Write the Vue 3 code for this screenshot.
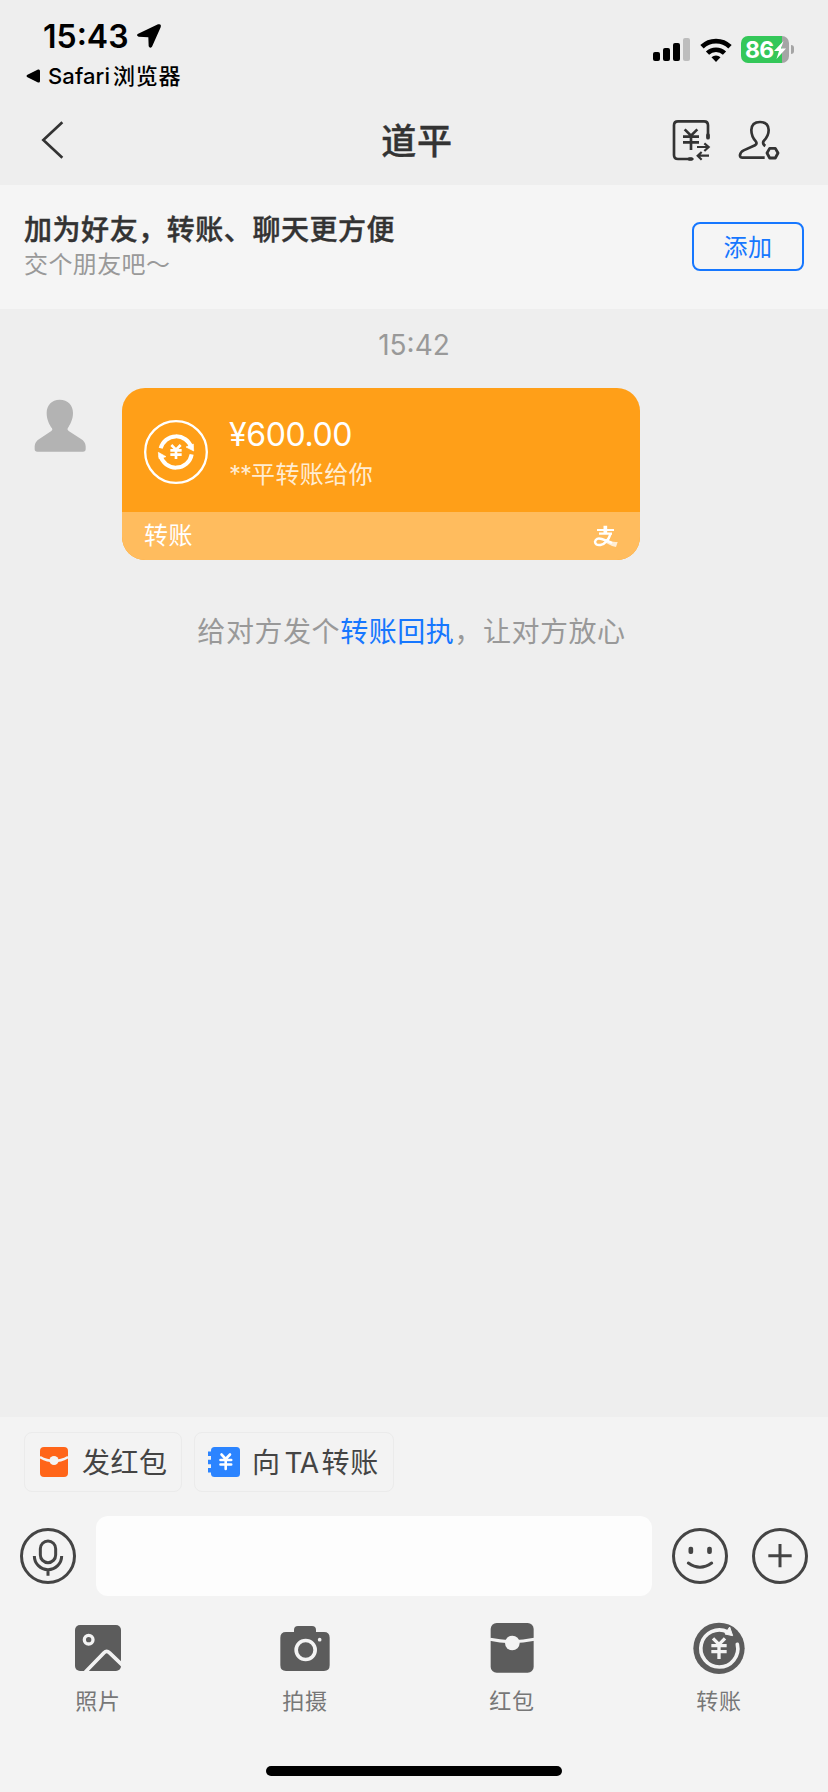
<script setup>
const tools = [
  { id: 'photo', label: '照片' },
  { id: 'camera', label: '拍摄' },
  { id: 'packet', label: '红包' },
  { id: 'transfer', label: '转账' },
]
</script>

<template>
  <div class="screen">
    <header class="header">
      <div class="status">
        <div class="status-left">
          <div class="clock">
            <span class="clock-time">15:43</span>
            <svg class="location" width="26" height="26" viewBox="408 69 78 78">
              <path d="M413 102 L474 73 Q485 70 482 82 L456 140 Q450 147 446 139 L445 112 L416 110 Q408 107 413 102Z" />
            </svg>
          </div>
          <div class="back-app">
            <svg width="15" height="14" viewBox="0 0 15 14"><path d="M1 6 L12 .6 Q14 0 14 2 V12 Q14 14 12 13.4 L1 8 Q0 7 1 6Z" /></svg>
            <span><b>Safari</b>浏览器</span>
          </div>
        </div>
        <div class="status-right">
          <svg width="37" height="24" viewBox="0 0 37 24">
            <rect x="0" y="14" width="7" height="9" rx="2" />
            <rect x="10" y="10" width="7" height="13" rx="2" />
            <rect x="20" y="5" width="7" height="18" rx="2" />
            <rect x="30" y="0" width="7" height="23" rx="2" fill="#bdbdbd" />
          </svg>
          <svg class="wifi" width="32" height="24" viewBox="0 0 32 24">
            <path d="M2 8.8 A20 20 0 0 1 30 8.8" fill="none" stroke="#000" stroke-width="4.8" />
            <path d="M7.5 15.2 A12.2 12.2 0 0 1 24.500 15.2" fill="none" stroke="#000" stroke-width="4.6" />
            <path d="M11.500 19.300 A6.5 6.5 0 0 1 20.500 19.300 L16 24Z" />
          </svg>
          <div class="battery">
            <span>86</span>
            <svg width="12" height="18" viewBox="0 0 12 18"><path d="M9.500 0 L0 10 H5 L2.500 18 L12 7.500 H7Z" fill="#fff" /></svg>
          </div>
          <i class="battery-cap"></i>
        </div>
      </div>
      <nav class="nav">
        <svg class="nav-back" width="23" height="38" viewBox="123 363 69 114">
          <path d="M187 367 L130 420 L187 473" fill="none" stroke="#333" stroke-width="8" />
        </svg>
        <h1>道平</h1>
        <div class="nav-actions">
          <svg width="40" height="43" viewBox="771 357 120 129" fill="none" stroke="#333" stroke-width="8">
            <path d="M882 413 V376 Q882 364 870 364 H792 Q780 364 780 376 V465 Q780 477 792 477 H835" stroke-linecap="round" />
            <path d="M812 388 L831 407 L850 388 M831 405 V450 M807 410 H855 M807 427 H855" />
            <path d="M849 441 H885 M871 430 L884 441 L871 453 M885 467 H851 M863 456 L851 467 L863 479" stroke-width="6.500" />
            <path d="M882 405 V413 M826 477 H832" stroke-width="11" stroke-linecap="round" />
          </svg>
          <svg width="44" height="42" viewBox="969 357 132 126" fill="none" stroke="#333" stroke-width="8">
            <path d="M1054 438 Q1044 432 1049 423 Q1064 408 1064 390 Q1063 366 1038 366 Q1013 366 1012 390 Q1012 410 1026 425 Q1030 432 1023 436 L989 451 Q979 456 978 465 Q977 473 986 473 H1052" />
            <path d="M1067 445 H1084 L1092 459 L1084 474 H1067 L1059 459Z" stroke-width="8.500" stroke-linejoin="round" />
          </svg>
        </div>
      </nav>
    </header>

    <section class="banner">
      <div class="banner-text">
        <strong>加为好友，转账、聊天更方便</strong>
        <p>交个朋友吧～</p>
      </div>
      <button class="add">添加</button>
    </section>

    <main class="chat">
      <div class="stamp">15:42</div>
      <div class="message">
        <svg class="avatar" width="52" height="53" viewBox="103 88 156 159">
          <path d="M180 90 C205 90 220 107 220 130 C220 150 211 165 204 176 Q202 181 207 184 L243 207 Q258 216 258 230 V238 Q258 246 250 246 H113 Q105 246 105 238 V230 Q105 216 120 207 L155 184 Q160 181 157 176 C149 165 141 150 141 130 C141 107 156 90 180 90Z" fill="#b3b3b3" />
        </svg>
        <article class="card">
          <div class="card-main">
            <svg width="64" height="64" viewBox="432 150 192 192" fill="none" stroke="#fff">
              <circle cx="528" cy="246" r="92.500" stroke-width="7" />
              <path d="M482 235 A48 48 0 0 1 574 232 M575 253 A48 48 0 0 1 481 256" stroke-width="12" />
              <path d="M558 231 L581 243 L580 222Z M475 247 L498 260 L477 266Z" fill="#fff" stroke-width="2" stroke-linejoin="round" />
              <path d="M514 225 L528 239 L542 225 M528 238 V267 M511 241 H545 M511 254 H545" stroke-width="8" />
            </svg>
            <div class="card-text">
              <div class="amount">¥600.00</div>
              <div class="desc"><i>**</i>平转账给你</div>
            </div>
          </div>
          <footer class="card-foot">
            <span>转账</span>
            <svg width="26" height="24" viewBox="537 465 78 72" fill="none" stroke="#fff">
              <path d="M574 467 V489" stroke-width="11" />
              <path d="M549 480 H600" stroke-width="6.500" />
              <path d="M555 491 H594" stroke-width="6.500" />
              <path d="M590 490 Q581 520 559 525 Q544 527 543 515 Q546 502 563 507 Q585 514 594 519" stroke-width="7.500" />
              <path d="M575 509 Q596 518 611 516 L606 531 Q592 528 575 518Z" fill="#fff" fill-opacity=".75" stroke="none" />
            </svg>
          </footer>
        </article>
      </div>
      <p class="hint">给对方发个<a>转账回执</a>，让对方放心</p>
    </main>

    <section class="composer">
      <div class="chips">
        <div class="chip">
          <svg width="28" height="30" viewBox="0 0 28 30">
            <rect width="28" height="30" rx="4" fill="#ff6519" />
            <path d="M0 10 Q14 18 28 10" fill="none" stroke="#f4f4f4" stroke-width="2.400" />
            <circle cx="14" cy="13.500" r="4.600" fill="#f4f4f4" />
          </svg>
          <span>发红包</span>
        </div>
        <div class="chip chip-transfer">
          <svg width="32" height="30" viewBox="0 0 32 30">
            <rect x="3" width="29" height="30" rx="3.500" fill="#2b84ff" />
            <path d="M0 4.500 H4 V9 H0Z M0 12.800 H4 V17.300 H0Z M0 21 H4 V25.500 H0Z" fill="#2b84ff" />
            <path d="M13.500 7.500 L17.700 12 L22 7.500 M17.700 12 V22 M12.500 13 H23.200 M12.500 17.500 H23.200" fill="none" stroke="#fff" stroke-width="2.600" stroke-linecap="round" />
          </svg>
          <span>向<b>TA</b>转账</span>
        </div>
      </div>

      <div class="input-row">
        <svg width="56" height="56" viewBox="60 384 168 168" fill="none" stroke="#444" stroke-width="9">
          <circle cx="144" cy="468" r="79.500" />
          <rect x="121" y="423" width="46" height="65" rx="23" />
          <path d="M103 468 A41 41 0 0 0 185 468 M144 509 V527" />
        </svg>
        <div class="input"></div>
        <svg class="smile" width="56" height="56" viewBox="774 384 168 168" fill="none" stroke="#444" stroke-width="9">
          <circle cx="858" cy="468" r="79.500" />
          <path d="M823 489 Q858 514 893 489" stroke-linecap="round" />
          <rect x="823.500" y="440" width="14" height="22" rx="6" fill="#444" stroke="none" />
          <rect x="879.500" y="440" width="14" height="22" rx="6" fill="#444" stroke="none" />
        </svg>
        <svg class="plus" width="56" height="56" viewBox="1014 384 168 168" fill="none" stroke="#444" stroke-width="9">
          <circle cx="1098" cy="468" r="79.500" />
          <path d="M1063 467 H1133 M1098 432 V502" />
        </svg>
      </div>

      <div class="tools">
        <div v-for="tool in tools" :key="tool.id" class="tool">
          <svg v-if="tool.id === 'photo'" width="52" height="52" viewBox="216 66 156 156">
            <rect x="225" y="75" width="138" height="138" rx="15" fill="#5c5c5c" />
            <circle cx="266" cy="119" r="13" fill="none" stroke="#f3f3f3" stroke-width="10" />
            <path d="M256 216 L312 158 Q320 150 328 158 L368 196" fill="none" stroke="#f3f3f3" stroke-width="11" />
          </svg>
          <svg v-else-if="tool.id === 'camera'" width="52" height="52" viewBox="837 66 156 156">
            <path d="M841 113 Q841 96 858 96 H882 V90 Q882 78 894 78 H936 Q948 78 948 90 V96 H972 Q989 96 989 113 V196 Q989 213 972 213 H858 Q841 213 841 196Z" fill="#5c5c5c" />
            <circle cx="917" cy="150" r="28.500" fill="none" stroke="#f3f3f3" stroke-width="11" />
            <circle cx="959" cy="119" r="5.500" fill="#f3f3f3" />
          </svg>
          <svg v-else-if="tool.id === 'packet'" width="52" height="52" viewBox="214 66 156 156">
            <rect x="228" y="69" width="129" height="149" rx="18" fill="#5c5c5c" />
            <path d="M226 118 Q292 132 359 118" fill="none" stroke="#f3f3f3" stroke-width="9" />
            <circle cx="293" cy="129" r="22" fill="#f3f3f3" />
          </svg>
          <svg v-else width="52" height="52" viewBox="838 66 156 156">
            <circle cx="916" cy="145" r="77" fill="#5c5c5c" />
            <path d="M971 133 A55.500 55.500 0 1 1 942 96" fill="none" stroke="#f3f3f3" stroke-width="11" stroke-linecap="round" />
            <path d="M948 81 L957 107 L934 102Z" fill="#f3f3f3" stroke="#f3f3f3" stroke-width="3" />
            <path d="M898 115 L916 133 L934 115 M916 131 V177 M893 137 H939 M893 155 H939" fill="none" stroke="#f3f3f3" stroke-width="10" />
          </svg>
          <span>{{ tool.label }}</span>
        </div>
      </div>
      <div class="home-bar"></div>
    </section>
  </div>
</template>

<style>
body {
  background: #eee;
}
</style>

<style scoped>
.screen {
  display: flex;
  flex-direction: column;
  width: 828px;
  height: 1792px;
  overflow: hidden;
  background: #eee;
  color: #333;
  font-family: Inter, "Noto Sans CJK SC", sans-serif;
}
svg {
  display: block;
  flex: none;
}
h1,
p {
  margin: 0;
}

.header {
  height: 185px;
  flex: none;
}
.status {
  display: flex;
  justify-content: space-between;
  height: 95px;
  color: #000;
}
.clock {
  display: flex;
  align-items: center;
  height: 40px;
  margin: 16px 0 0 43px;
}
.clock-time {
  width: 93px;
  padding-top: 1px;
  font-size: 32px;
  font-weight: 600;
  line-height: 39px;
  white-space: nowrap;
}
.back-app {
  display: flex;
  align-items: center;
  height: 30px;
  margin: 5px 0 0 26px;
  font-size: 22px;
  font-weight: 500;
  line-height: 30px;
  letter-spacing: 0.7px;
}
.back-app span {
  margin-left: 7px;
  white-space: nowrap;
}
.back-app b {
  margin-right: 3px;
  font-weight: 500;
  letter-spacing: 0.1px;
}
.status-right {
  display: flex;
  align-items: center;
  height: 27px;
  margin: 36px 34px 0 0;
}
.wifi {
  margin: 0 9px 0 10px;
}
.battery {
  display: flex;
  align-items: center;
  box-sizing: border-box;
  width: 48px;
  height: 27px;
  padding-left: 4px;
  border-radius: 7px;
  background: linear-gradient(90deg, #34c759 41px, #a5a5a5 41px);
  color: #fff;
  font-size: 23px;
  font-weight: 700;
  line-height: 27px;
  letter-spacing: -0.7px;
}
.battery span {
  padding-top: 1px;
}
.battery-cap {
  width: 3px;
  height: 9px;
  margin-left: 2px;
  border-radius: 0 4px 4px 0;
  background: #a5a5a5;
}
.nav {
  display: grid;
  grid-template-columns: 1fr auto 1fr;
  align-items: center;
  height: 90px;
}
.nav-back {
  margin-left: 41px;
}
h1 {
  padding: 2px 0 0 6px;
  font-size: 35px;
  font-weight: 500;
  line-height: 50px;
  letter-spacing: 0.8px;
  -webkit-text-stroke: 0.4px #333;
}
.nav-actions {
  display: flex;
  gap: 26px;
  justify-content: flex-end;
  margin-right: 47px;
}

.banner {
  display: flex;
  flex: none;
  align-items: flex-start;
  justify-content: space-between;
  box-sizing: border-box;
  height: 124px;
  padding: 25px 24px 0;
  background: #f5f5f5;
}
.banner strong {
  display: block;
  font-size: 28px;
  font-weight: 500;
  line-height: 40px;
  letter-spacing: 0.55px;
  -webkit-text-stroke: 0.4px #333;
}
.banner p {
  color: #999;
  font-size: 24px;
  line-height: 30px;
  letter-spacing: 0.4px;
}
.add {
  width: 112px;
  height: 49px;
  margin-top: 12px;
  padding: 2px 0 0;
  border: 2px solid #1677ff;
  border-radius: 8px;
  background: transparent;
  color: #1677ff;
  font-family: inherit;
  font-size: 24px;
  line-height: 43px;
  letter-spacing: 0.5px;
}

.chat {
  flex: 1;
}
.stamp {
  margin-top: 20px;
  color: #999;
  font-size: 28px;
  line-height: 32px;
  text-align: center;
}
.message {
  display: flex;
  align-items: flex-start;
  margin: 27px 0 0 34px;
}
.avatar {
  margin: 11px 36px 0 0;
}
.card {
  width: 518px;
  height: 172px;
  overflow: hidden;
  border-radius: 23px;
  background: #ff9f18;
  color: #fff;
}
.card-main {
  display: flex;
  align-items: center;
  height: 124px;
  padding: 2px 22px 0;
  box-sizing: border-box;
  gap: 21px;
}
.card-main > svg {
  margin-top: 2px;
}
.card-text {
  padding-top: 6px;
}
.amount {
  font-size: 32px;
  line-height: 42px;
  letter-spacing: -0.4px;
}
.desc {
  color: rgba(255, 255, 255, 0.82);
  font-size: 24px;
  line-height: 38px;
  letter-spacing: 0.4px;
}
.desc i {
  font-style: normal;
  letter-spacing: -1px;
}
.card-foot {
  display: flex;
  align-items: center;
  justify-content: space-between;
  height: 48px;
  padding: 0 21px 0 22px;
  background: #ffbc5e;
  font-size: 24px;
  line-height: 30px;
  letter-spacing: 0.5px;
}
.card-foot svg {
  margin-top: 2px;
}
.hint {
  margin-top: 52px;
  padding-right: 5px;
  color: #999;
  font-size: 28px;
  line-height: 40px;
  letter-spacing: 0.55px;
  text-align: center;
}
.hint a {
  color: #1677ff;
}

.composer {
  flex: none;
  height: 375px;
  background: #f3f3f3;
}
.chips {
  display: flex;
  gap: 12px;
  padding: 15px 24px 0;
}
.chip {
  display: flex;
  align-items: center;
  box-sizing: border-box;
  width: 158px;
  height: 60px;
  padding-left: 15px;
  border: 1px solid #ebebeb;
  border-radius: 8px;
  color: #444;
  font-size: 28px;
  letter-spacing: 0.55px;
  white-space: nowrap;
}
.chip span {
  margin: -2px 0 0 14px;
}
.chip b {
  margin: 0 3px 0 4px;
  font-weight: 400;
  letter-spacing: -0.5px;
}
.chip-transfer {
  width: 200px;
  padding-left: 13px;
}
.chip-transfer span {
  margin-left: 12px;
}
.input-row {
  display: flex;
  align-items: center;
  margin-top: 24px;
  padding-left: 20px;
}
.input {
  width: 556px;
  height: 80px;
  margin-left: 20px;
  border-radius: 12px;
  background: #fdfdfd;
}
.smile {
  margin-left: 20px;
}
.plus {
  margin-left: 24px;
}
.tools {
  display: flex;
  gap: 155px;
  margin-top: 26px;
  padding-left: 72px;
}
.tool {
  display: flex;
  flex-direction: column;
  align-items: center;
  width: 52px;
  color: #777;
  font-size: 22px;
  line-height: 32px;
  letter-spacing: 0.8px;
  white-space: nowrap;
}
.tool span {
  margin-top: 11px;
}
.home-bar {
  width: 296px;
  height: 10px;
  margin: 49px auto 0;
  border-radius: 5px;
  background: #000;
}
</style>
